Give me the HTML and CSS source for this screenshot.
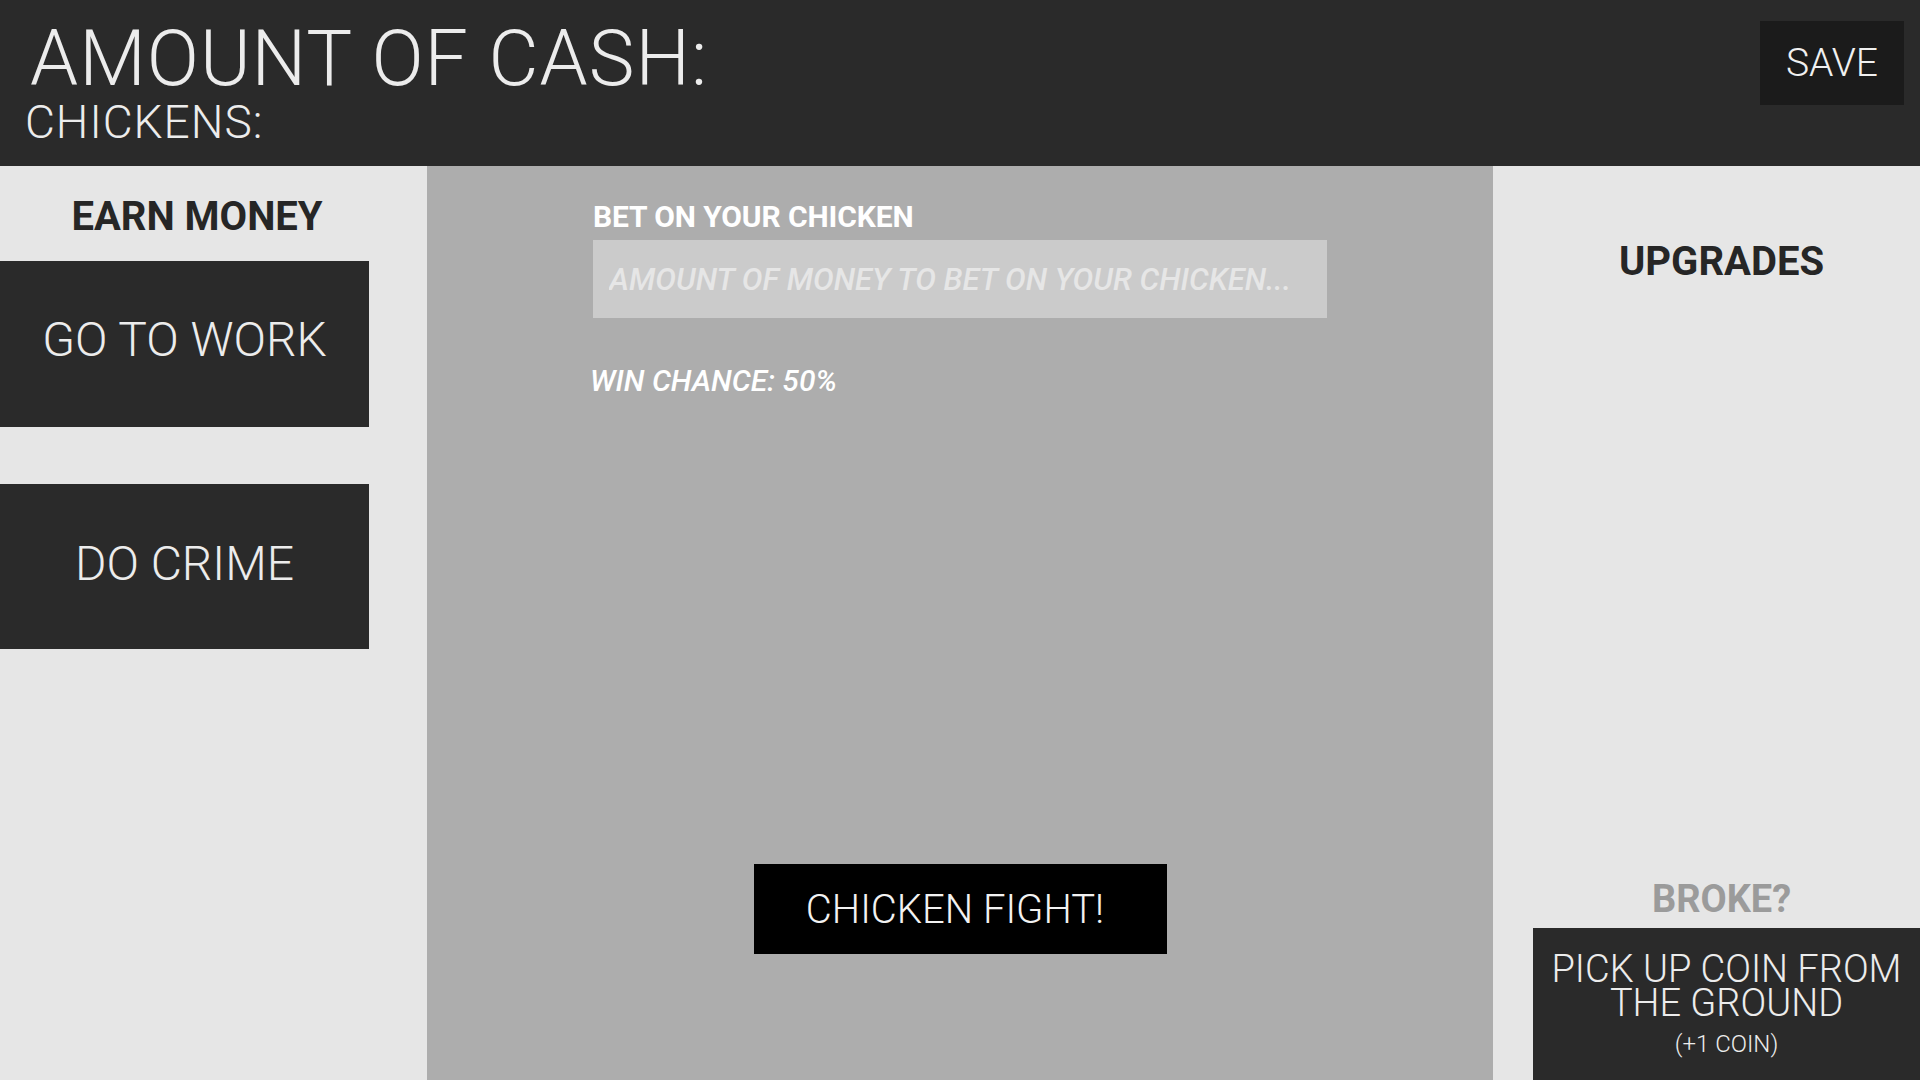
FILE: index.html
```html
<!DOCTYPE html>
<html lang="en">
<head>
<meta charset="utf-8">
<title>Chicken Game</title>
<link rel="stylesheet" href="styles.css">
</head>
<body>
<header class="topbar">
  <div class="stats">
    <h1 class="cash">AMOUNT OF CASH:</h1>
    <div class="chickens">CHICKENS:</div>
  </div>
  <button class="save-btn">SAVE</button>
</header>
<main class="layout">
  <section class="col col-left">
    <h2 class="col-title">EARN MONEY</h2>
    <button class="big-btn">GO TO WORK</button>
    <button class="big-btn big-btn-second">DO CRIME</button>
  </section>
  <section class="col col-mid">
    <div class="bet">
      <label class="bet-label" for="bet">BET ON YOUR CHICKEN</label>
      <input id="bet" class="bet-input" type="text" placeholder="AMOUNT OF MONEY TO BET ON YOUR CHICKEN...">
      <div class="win-chance">WIN CHANCE: 50%</div>
    </div>
    <div class="spacer"></div>
    <button class="fight-btn">CHICKEN FIGHT!</button>
  </section>
  <section class="col col-right">
    <h2 class="col-title upgrades-title">UPGRADES</h2>
    <div class="spacer"></div>
    <div class="broke">BROKE?</div>
    <button class="coin-btn">
      <span class="coin-main">PICK UP COIN FROM THE GROUND</span>
      <span class="coin-sub">(+1 COIN)</span>
    </button>
  </section>
</main>
</body>
</html>
```
FILE: styles.css
```css
* { box-sizing: border-box; }
html, body {
  margin: 0;
  padding: 0;
  width: 1920px;
  height: 1080px;
  overflow: hidden;
  font-family: Roboto, "Noto Sans", sans-serif;
}
body {
  display: flex;
  flex-direction: column;
}
button {
  font-family: Roboto, "Noto Sans", sans-serif;
  border: none;
  cursor: pointer;
}

.topbar {
  height: 166px;
  flex: none;
  background: #2a2a2a;
  display: flex;
  justify-content: space-between;
  align-items: flex-start;
  padding: 21px 16px 0 25px;
}
.stats { display: flex; flex-direction: column; }
.cash {
  margin: 0;
  font-size: 77px;
  line-height: 77px;
  font-weight: 300;
  letter-spacing: 1px;
  color: #ececec;
  padding-left: 5px;
}
.chickens {
  margin-top: 1px;
  font-size: 46px;
  line-height: 46px;
  font-weight: 300;
  letter-spacing: 1px;
  color: #ececec;
}
.save-btn {
  width: 144px;
  height: 84px;
  background: #1b1b1b;
  color: #f0f0f0;
  font-size: 39px;
  font-weight: 300;
  padding: 0;
}

.layout {
  flex: 1;
  display: grid;
  grid-template-columns: 427px 1066px 427px;
  min-height: 0;
}
.col {
  display: flex;
  flex-direction: column;
  min-height: 0;
}
.col-left {
  background: #e6e6e6;
  padding-top: 27px;
}
.col-title {
  margin: 0;
  font-size: 40px;
  font-weight: 700;
  line-height: 47px;
  color: #262626;
  text-align: center;
}
.col-left .col-title { padding-right: 33px; }
.big-btn {
  width: 369px;
  height: 166px;
  margin-top: 21px;
  background: #2a2a2a;
  color: #ececec;
  font-size: 48px;
  font-weight: 300;
  padding: 0 0 10px 0;
}
.big-btn-second {
  margin-top: 57px;
  height: 165px;
  padding-bottom: 6px;
}

.col-mid {
  background: #adadad;
  align-items: center;
  padding-top: 33px;
  padding-bottom: 126px;
}
.bet {
  width: 734px;
  display: flex;
  flex-direction: column;
}
.bet-label {
  font-size: 30px;
  font-weight: 700;
  line-height: 35px;
  color: #ffffff;
  letter-spacing: -0.1px;
}
.bet-input {
  margin-top: 6px;
  height: 78px;
  width: 734px;
  background: #cbcbcb;
  border: none;
  outline: none;
  padding: 0 16px;
  font-family: Roboto, "Noto Sans", sans-serif;
  font-size: 31px;
  font-weight: 500;
  font-style: italic;
  color: #333;
}
.bet-input::placeholder {
  color: #e6e6e6;
  opacity: 1;
}
.win-chance {
  margin-top: 45px;
  margin-left: -3px;
  font-size: 30px;
  line-height: 35px;
  font-style: italic;
  font-weight: 500;
  color: #ffffff;
}
.spacer { flex: 1; }
.fight-btn {
  width: 413px;
  height: 90px;
  background: #000;
  color: #f2f2f2;
  font-size: 40px;
  font-weight: 300;
  padding: 0 10px 0 0;
}

.col-right {
  background: #e6e6e6;
  padding-top: 72px;
  padding-left: 30px;
}
.broke {
  font-size: 38px;
  font-weight: 700;
  line-height: 45px;
  color: #9b9b9b;
  text-align: center;
}
.coin-btn {
  margin-top: 6px;
  margin-left: 10px;
  height: 152px;
  flex: none;
  background: #2a2a2a;
  color: #ececec;
  display: flex;
  flex-direction: column;
  align-items: center;
  justify-content: flex-start;
  padding: 24px 8px 0 8px;
}
.coin-main {
  display: block;
  font-size: 38px;
  font-weight: 300;
  line-height: 34px;
  text-align: center;
}
.coin-sub {
  display: block;
  margin-top: 10px;
  font-size: 24px;
  line-height: 28px;
  font-weight: 300;
}
```
